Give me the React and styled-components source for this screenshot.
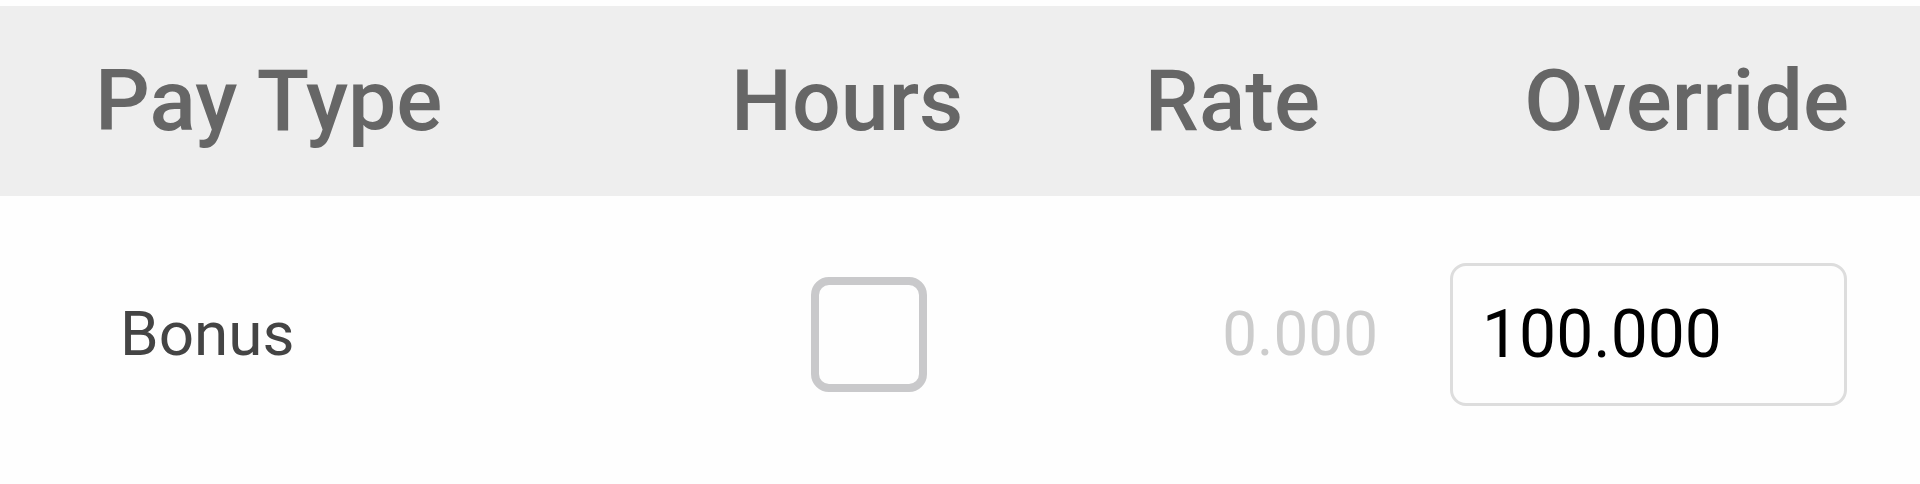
import React, { useState } from "react";
import styled, { createGlobalStyle } from "styled-components";

const GlobalStyle = createGlobalStyle`
    html, body {
        margin: 0;
        padding: 0;
        background: #fefefe;
        font-family: Roboto, "Noto Sans", sans-serif;
    }
`;

const columns = "700px 300px 420px 1fr";

const payLines = [{ _id: 1, payType: "Bonus", hours: false, rate: "0.000", override: "100.000" }];

const App = () => {
    const [lines, setLines] = useState(payLines);

    const setOverride = (id, value) =>
        setLines(lines.map((l) => (l._id === id ? { ...l, override: value } : l)));

    const toggleHours = (id) =>
        setLines(lines.map((l) => (l._id === id ? { ...l, hours: !l.hours } : l)));

    return (
        <>
            <GlobalStyle />
            <Wrapper>
                <HeaderRow>
                    <HeadCell $pl={95}>Pay Type</HeadCell>
                    <HeadCell $pl={31}>Hours</HeadCell>
                    <HeadCell $align="end" $pr={100}>
                        Rate
                    </HeadCell>
                    <HeadCell $align="end" $pr={71}>
                        Override
                    </HeadCell>
                </HeaderRow>
                {lines.map((line) => (
                    <BodyRow key={line._id}>
                        <Cell $pl={120}>{line.payType}</Cell>
                        <Cell $pl={111}>
                            <Check
                                type="checkbox"
                                checked={line.hours}
                                onChange={() => toggleHours(line._id)}
                            />
                        </Cell>
                        <Cell $align="end" $pr={42} $muted>
                            {line.rate}
                        </Cell>
                        <Cell $align="end" $pr={73}>
                            <OverrideInput
                                value={line.override}
                                onChange={(e) => setOverride(line._id, e.target.value)}
                            />
                        </Cell>
                    </BodyRow>
                ))}
            </Wrapper>
        </>
    );
};

const Wrapper = styled.div`
    width: 1920px;
    height: 484px;
    padding-top: 6px;
    box-sizing: border-box;
    background: #fefefe;
`;

const HeaderRow = styled.div`
    display: grid;
    grid-template-columns: ${columns};
    align-items: center;
    height: 190px;
    background: #eeeeee;
`;

const HeadCell = styled.div`
    display: flex;
    justify-content: ${(p) => (p.$align === "end" ? "flex-end" : "flex-start")};
    padding-left: ${(p) => p.$pl || 0}px;
    padding-right: ${(p) => p.$pr || 0}px;
    font-size: 86px;
    font-weight: 500;
    color: #666666;
    line-height: 1;
`;

const BodyRow = styled.div`
    display: grid;
    grid-template-columns: ${columns};
    align-items: center;
    height: 276px;
`;

const Cell = styled.div`
    display: flex;
    align-items: center;
    justify-content: ${(p) => (p.$align === "end" ? "flex-end" : "flex-start")};
    padding-left: ${(p) => p.$pl || 0}px;
    padding-right: ${(p) => p.$pr || 0}px;
    font-size: 62px;
    color: ${(p) => (p.$muted ? "#cccccc" : "#444444")};
    line-height: 1;
`;

const Check = styled.input`
    appearance: none;
    margin: 0;
    width: 116px;
    height: 115px;
    border: 8px solid #c9c9cb;
    border-radius: 18px;
    background: #fefefe;
    box-sizing: border-box;
    cursor: pointer;

    &:checked {
        background: #2f7de1;
        border-color: #2f7de1;
    }
`;

const OverrideInput = styled.input`
    width: 397px;
    height: 143px;
    box-sizing: border-box;
    border: 3px solid #dddddd;
    border-radius: 16px;
    padding: 0 0 0 29px;
    font-family: Roboto, "Noto Sans", sans-serif;
    font-size: 66px;
    color: #000000;
    background: #fefefe;
    outline: none;
`;

export default App;
